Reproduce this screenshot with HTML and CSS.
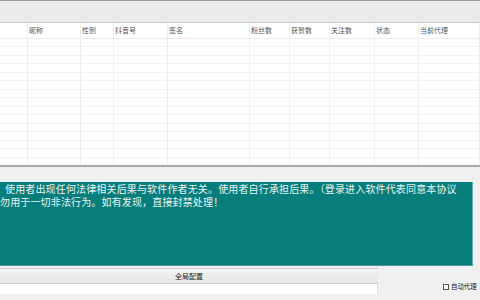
FILE: index.html
```html
<!DOCTYPE html>
<html>
<head>
<meta charset="utf-8">
<link rel="stylesheet" href="styles.css">
</head>
<body>
<div class="app">
  <div class="topbar"></div>
  <div class="grid">
    <div class="row head">
      <div class="c"></div><div class="c">昵称</div><div class="c">性别</div><div class="c">抖音号</div><div class="c">签名</div><div class="c">粉丝数</div><div class="c">获赞数</div><div class="c">关注数</div><div class="c">状态</div><div class="c">当前代理</div>
    </div>
    <div class="body">
      <div class="row"><div class="c"></div><div class="c"></div><div class="c"></div><div class="c"></div><div class="c"></div><div class="c"></div><div class="c"></div><div class="c"></div><div class="c"></div><div class="c"></div></div>
      <div class="row"><div class="c"></div><div class="c"></div><div class="c"></div><div class="c"></div><div class="c"></div><div class="c"></div><div class="c"></div><div class="c"></div><div class="c"></div><div class="c"></div></div>
      <div class="row"><div class="c"></div><div class="c"></div><div class="c"></div><div class="c"></div><div class="c"></div><div class="c"></div><div class="c"></div><div class="c"></div><div class="c"></div><div class="c"></div></div>
      <div class="row"><div class="c"></div><div class="c"></div><div class="c"></div><div class="c"></div><div class="c"></div><div class="c"></div><div class="c"></div><div class="c"></div><div class="c"></div><div class="c"></div></div>
      <div class="row"><div class="c"></div><div class="c"></div><div class="c"></div><div class="c"></div><div class="c"></div><div class="c"></div><div class="c"></div><div class="c"></div><div class="c"></div><div class="c"></div></div>
      <div class="row"><div class="c"></div><div class="c"></div><div class="c"></div><div class="c"></div><div class="c"></div><div class="c"></div><div class="c"></div><div class="c"></div><div class="c"></div><div class="c"></div></div>
      <div class="row"><div class="c"></div><div class="c"></div><div class="c"></div><div class="c"></div><div class="c"></div><div class="c"></div><div class="c"></div><div class="c"></div><div class="c"></div><div class="c"></div></div>
      <div class="row"><div class="c"></div><div class="c"></div><div class="c"></div><div class="c"></div><div class="c"></div><div class="c"></div><div class="c"></div><div class="c"></div><div class="c"></div><div class="c"></div></div>
      <div class="row"><div class="c"></div><div class="c"></div><div class="c"></div><div class="c"></div><div class="c"></div><div class="c"></div><div class="c"></div><div class="c"></div><div class="c"></div><div class="c"></div></div>
      <div class="row"><div class="c"></div><div class="c"></div><div class="c"></div><div class="c"></div><div class="c"></div><div class="c"></div><div class="c"></div><div class="c"></div><div class="c"></div><div class="c"></div></div>
      <div class="row"><div class="c"></div><div class="c"></div><div class="c"></div><div class="c"></div><div class="c"></div><div class="c"></div><div class="c"></div><div class="c"></div><div class="c"></div><div class="c"></div></div>
      <div class="row"><div class="c"></div><div class="c"></div><div class="c"></div><div class="c"></div><div class="c"></div><div class="c"></div><div class="c"></div><div class="c"></div><div class="c"></div><div class="c"></div></div>
      <div class="row"><div class="c"></div><div class="c"></div><div class="c"></div><div class="c"></div><div class="c"></div><div class="c"></div><div class="c"></div><div class="c"></div><div class="c"></div><div class="c"></div></div>
      <div class="row"><div class="c"></div><div class="c"></div><div class="c"></div><div class="c"></div><div class="c"></div><div class="c"></div><div class="c"></div><div class="c"></div><div class="c"></div><div class="c"></div></div>
      <div class="row"><div class="c"></div><div class="c"></div><div class="c"></div><div class="c"></div><div class="c"></div><div class="c"></div><div class="c"></div><div class="c"></div><div class="c"></div><div class="c"></div></div>
    </div>
  </div>
  <div class="gap"></div>
  <div class="notice">
    <p class="l1">使用者出现任何法律相关后果与软件作者无关。使用者自行承担后果。（登录进入软件代表同意本协议</p>
    <p class="l2">勿用于一切非法行为。如有发现，直接封禁处理！</p>
  </div>
  <div class="bottom">
    <div class="left">
      <div class="btn">全局配置</div>
      <div class="field"></div>
    </div>
    <label class="chk"><span class="box"></span>自动代理</label>
  </div>
</div>
</body>
</html>
```

FILE: styles.css
```css
* { box-sizing: border-box; margin: 0; padding: 0; }
html, body { width: 480px; height: 300px; overflow: hidden; }
body {
  background: #f0f0f0;
  font-family: "Noto Sans CJK SC", "Noto Sans", sans-serif;
}
.app { display: flex; flex-direction: column; height: 300px; }
.topbar {
  height: 23px;
  background: #ebebeb;
  border-top: 1px solid #9a9a9a;
  border-bottom: 1px solid #c9c9c9;
}
.grid {
  height: 145px;
  background: #fff;
  border-bottom: 2px solid #a9a9a9;
  overflow: hidden;
}
.row {
  display: grid;
  grid-template-columns: 28px 53px 33px 54px 82px 40px 40px 45px 44px 1fr;
  height: 8.5px;
  border-bottom: 1px solid #f2f2f2;
}
.row .c { border-right: 1px solid #f0f0f0; }
.row.head {
  height: 16px;
  border-bottom: 1px solid #ececec;
}
.head .c {
  font-size: 7px;
  line-height: 14px;
  color: #555;
  padding-left: 1px;
  white-space: nowrap;
}
.gap { height: 15px; }
.notice {
  height: 84px;
  margin-right: 7px;
  background: #087e7c;
  border-right: 1px solid #5fb3ad;
  border-bottom: 1px solid #5a9a96;
  color: #e8f4f2;
  font-family: "Noto Sans CJK SC", sans-serif;
  font-size: 10px;
  line-height: 13px;
  padding-top: 0;
  white-space: nowrap;
  overflow: hidden;
}
.notice .l1 { padding-left: 5px; letter-spacing: 0.15px; }
.notice .l2 { padding-left: 0; letter-spacing: 0.15px; }
.bottom {
  display: flex;
  align-items: flex-end;
  margin-top: 2px;
  padding-bottom: 6px;
}
.left { width: 378px; display: flex; flex-direction: column; }
.btn {
  height: 16px;
  background: linear-gradient(#f4f4f4, #e6e6e6);
  border-top: 1px solid #d0d0d0;
  border-bottom: 1px solid #cfcfcf;
  font-size: 7px;
  line-height: 14px;
  text-align: center;
  color: #222;
}
.field {
  height: 10px;
  background: #fff;
  border-right: 1px solid #e0e0e0;
}
.chk {
  margin-left: 65px;
  display: flex;
  align-items: center;
  gap: 2px;
  font-size: 6.4px;
  line-height: 10px;
  color: #222;
  margin-bottom: 2px;
}
.box {
  width: 6px;
  height: 6px;
  border: 1px solid #555;
  background: #fff;
}
```
